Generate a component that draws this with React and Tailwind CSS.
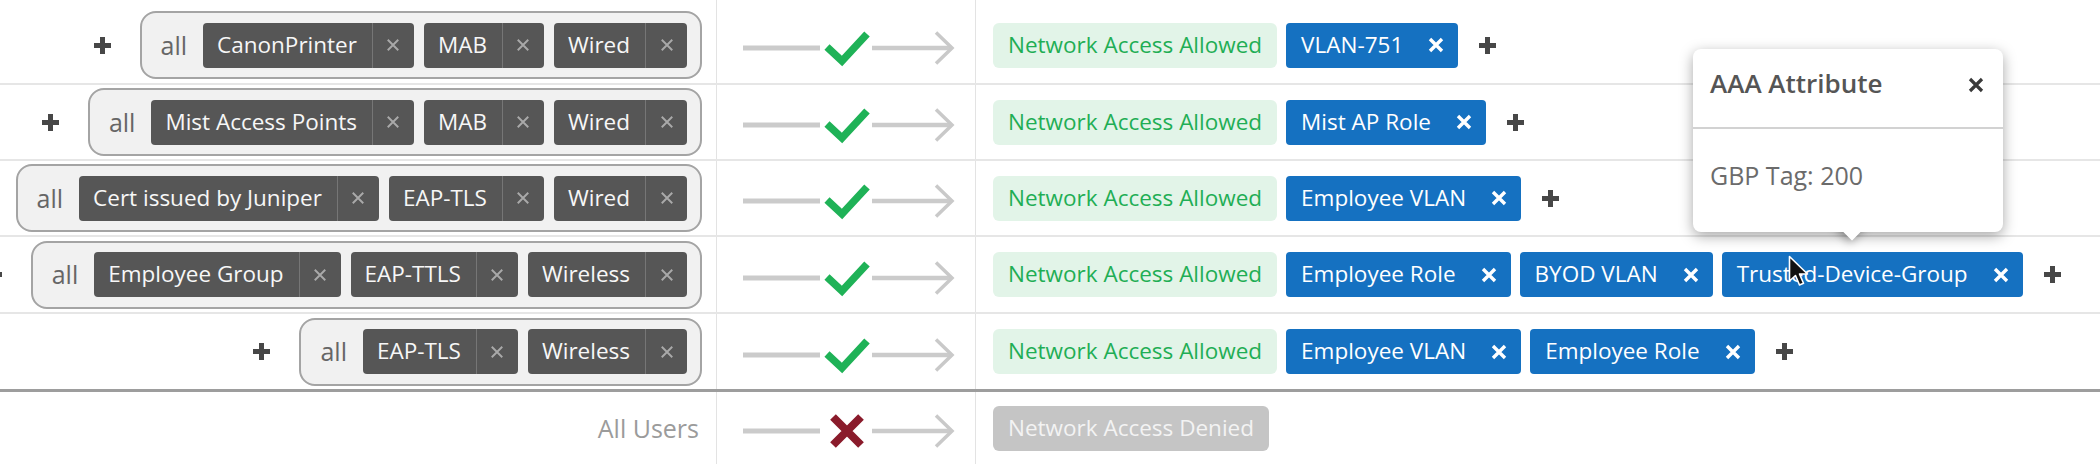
import React from "react";

const Cross = ({ size = 13, stroke = 2.4, className = "" }) => (
  <svg width={size} height={size} viewBox="0 0 16 16" className={className}>
    <path d="M2 2L14 14M14 2L2 14" stroke="currentColor" strokeWidth={stroke} fill="none" />
  </svg>
);

const Plus = ({ className = "" }) => (
  <svg width="19" height="19" viewBox="0 0 19 19" className={className}>
    <path d="M9.5 1v17M1 9.5h17" stroke="currentColor" strokeWidth="5" fill="none" />
  </svg>
);

const DarkChip = ({ label }) => (
  <div className="flex h-[45px] items-stretch rounded-[4px] bg-[#565656] text-[#f7f7f7]">
    <span className="flex items-center whitespace-nowrap pl-[14px] pr-[15px] text-[22.5px] leading-none">{label}</span>
    <span className="w-px bg-[#767676]" />
    <span className="flex w-[41px] items-center justify-center text-[#a9a9a9]">
      <Cross size={14} stroke={2.2} />
    </span>
  </div>
);

const BlueChip = ({ label }) => (
  <div className="flex h-[45px] items-center gap-[25px] whitespace-nowrap rounded-[4px] bg-[#1571c1] pl-[15px] pr-[14px] text-[22.5px] leading-none text-white">
    <span>{label}</span>
    <Cross size={16} stroke={3.4} className="text-white" />
  </div>
);

const Flow = ({ ok }) => (
  <svg width="258" height="44" viewBox="0 0 258 44" className="mt-[6px]">
    <line x1="26" y1="22" x2="103" y2="22" stroke="#cbcbcb" strokeWidth="5" />
    <line x1="155" y1="22" x2="234" y2="22" stroke="#cbcbcb" strokeWidth="4.5" />
    <polyline points="219,6.5 235,22 219,37.5" fill="none" stroke="#c9c9c9" strokeWidth="3.5" />
    {ok ? (
      <polyline points="110,21 125,35 150,8" fill="none" stroke="#1fb257" strokeWidth="7.5" />
    ) : (
      <path d="M116 8 L144 36 M144 8 L116 36" stroke="#8a1b2b" strokeWidth="8" fill="none" />
    )}
  </svg>
);

const rows = [
  { chips: ["CanonPrinter", "MAB", "Wired"], results: ["VLAN-751"] },
  { chips: ["Mist Access Points", "MAB", "Wired"], results: ["Mist AP Role"] },
  { chips: ["Cert issued by Juniper", "EAP-TLS", "Wired"], results: ["Employee VLAN"] },
  { chips: ["Employee Group", "EAP-TTLS", "Wireless"], results: ["Employee Role", "BYOD VLAN", "Trusted-Device-Group"] },
  { chips: ["EAP-TLS", "Wireless"], results: ["Employee VLAN", "Employee Role"] },
];

const rowClasses = [
  "h-[83px]",
  "h-[76px] border-t-2 border-[#e6e6e6]",
  "h-[76px] border-t-2 border-[#e6e6e6]",
  "h-[77px] border-t-2 border-[#e6e6e6]",
  "h-[77px] border-t-2 border-[#e6e6e6]",
];

export default function App() {
  return (
    <div className="relative h-[464px] w-[2100px] overflow-hidden bg-white font-['Open_Sans',sans-serif]">
      {rows.map((r, i) => (
        <div key={i} className={`flex ${rowClasses[i]}`}>
          <div className={`flex w-[717px] shrink-0 items-center justify-end gap-[28px] overflow-hidden border-r border-[#e3e3e3] pr-[14px] ${i === 0 ? "pt-[7px]" : ""}`}>
            <Plus className="shrink-0 text-[#474747]" />
            <div className="flex h-[68px] shrink-0 items-center rounded-[16px] border-2 border-[#a4a4a4] bg-[#f1f1f1] pl-[19px] pr-[13px]">
              <span className="mr-[16px] text-[25px] leading-none text-[#666666]">all</span>
              <div className="flex gap-[10px]">
                {r.chips.map((c) => (
                  <DarkChip key={c} label={c} />
                ))}
              </div>
            </div>
          </div>
          <div className={`flex w-[259px] shrink-0 items-center border-r border-[#e3e3e3] ${i === 0 ? "pt-[7px]" : ""}`}>
            <Flow ok />
          </div>
          <div className={`flex flex-1 items-center gap-[9px] pl-[17px] ${i === 0 ? "pt-[7px]" : ""}`}>
            <div className="flex h-[45px] items-center whitespace-nowrap rounded-[6px] bg-[#e2f4e8] px-[15px] text-[22.5px] leading-none text-[#1fae55]">
              Network Access Allowed
            </div>
            {r.results.map((c) => (
              <BlueChip key={c} label={c} />
            ))}
            <Plus className="ml-[11px] shrink-0 text-[#474747]" />
          </div>
        </div>
      ))}
      <div className="flex h-[75px] border-t-[3px] border-[#9d9d9d]">
        <div className="flex w-[717px] shrink-0 items-center justify-end border-r border-[#e3e3e3] pr-[17px]">
          <span className="text-[25px] leading-none text-[#9b9b9b]">All Users</span>
        </div>
        <div className="flex w-[259px] shrink-0 items-center border-r border-[#e3e3e3]">
          <Flow ok={false} />
        </div>
        <div className="flex flex-1 items-center pl-[17px]">
          <div className="flex h-[45px] items-center whitespace-nowrap rounded-[6px] bg-[#c5c5c5] px-[15px] text-[22.5px] leading-none text-[#f3f3f3]">
            Network Access Denied
          </div>
        </div>
      </div>

      {/* Popover */}
      <div className="absolute left-[1693px] top-[49px] w-[310px]">
        <div className="absolute left-[148px] top-[165px] h-[22px] w-[22px] rotate-45 bg-white shadow-[0_3px_10px_rgba(0,0,0,0.35)]" />
        <div className="relative h-[183px] rounded-[8px] bg-white shadow-[0_4px_14px_rgba(0,0,0,0.35)]">
          <div className="flex h-[80px] items-start justify-between border-b-2 border-[#d2d2d2] pl-[17px] pr-[19px] pt-[20px]">
            <span className="text-[26px] font-semibold leading-[28px] text-[#555555]">AAA Attribute</span>
            <Cross size={16} stroke={3.2} className="mt-[8px] text-[#3a3a3a]" />
          </div>
          <div className="pl-[17px] pt-[34px] text-[25px] leading-[25px] text-[#6b6b6b]">GBP Tag: 200</div>
        </div>
        <div className="absolute left-[148px] top-[165px] h-[22px] w-[22px] rotate-45 bg-white" />
      </div>

      {/* Cursor */}
      <svg className="absolute left-[1788px] top-[255px]" width="22" height="34" viewBox="0 0 22 34">
        <path d="M1.5 1.5 L1.5 26 L7.5 20.5 L11.5 30 L15.5 28.3 L11.5 19 L19.5 19 Z" fill="#111" stroke="#fff" strokeWidth="1.6" strokeLinejoin="round" />
      </svg>
    </div>
  );
}
